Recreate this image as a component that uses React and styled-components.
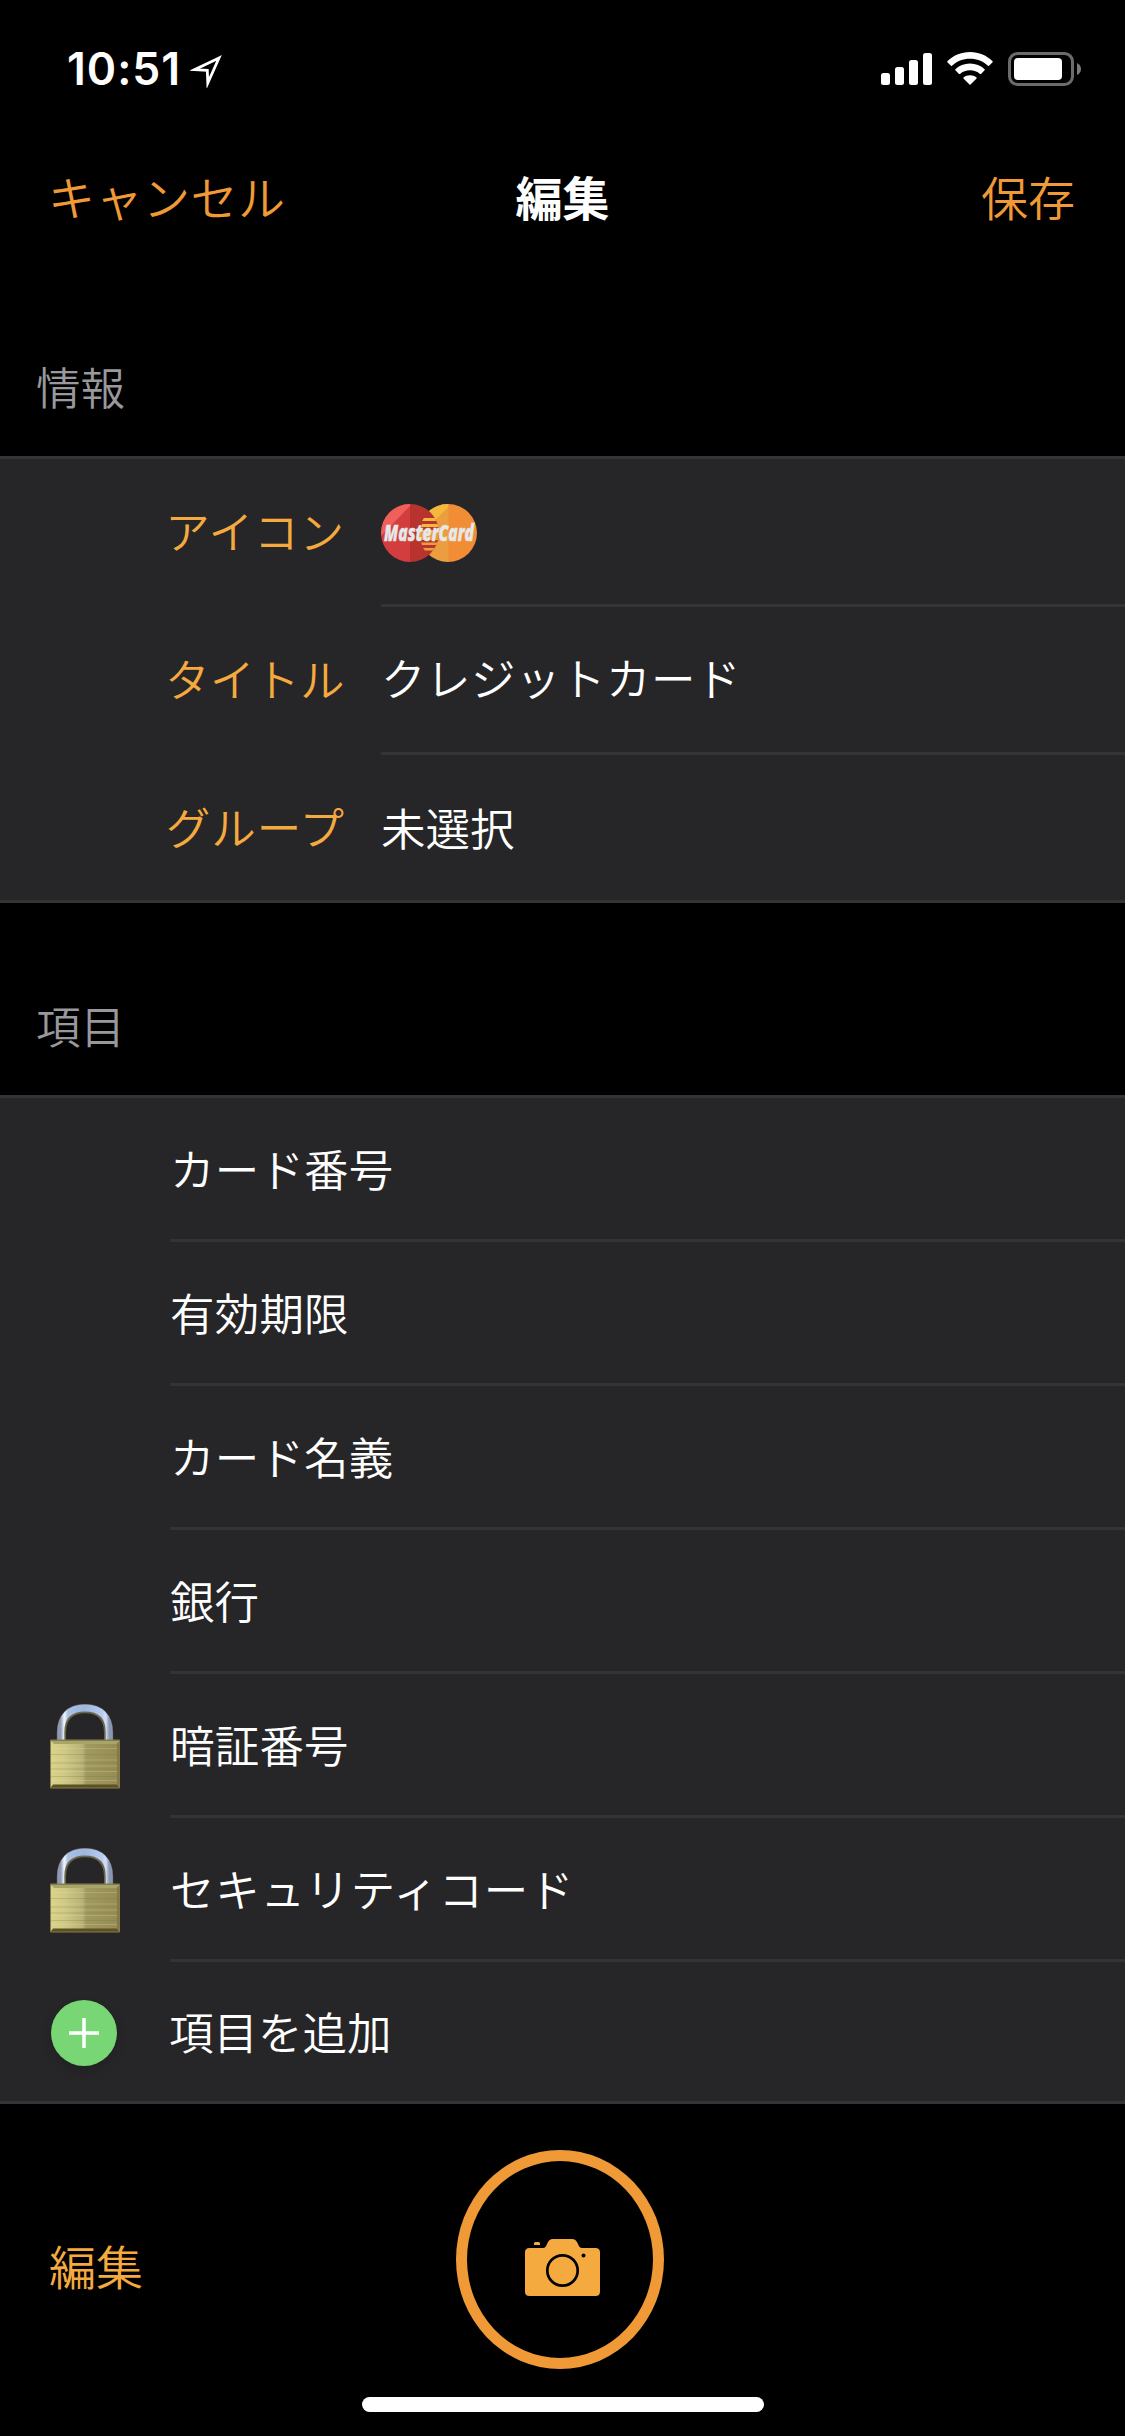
import React from 'react'

import styled, { createGlobalStyle, css } from 'styled-components'

const INFO_ROWS = [
  { label: 'アイコン', icon: true, labelSpacing: 1 },
  { label: 'タイトル', value: 'クレジットカード', lift: 6, spacing: 0.5, labelSpacing: 0.5 },
  { label: 'グループ', value: '未選択', labelSpacing: 1 }
]

const FIELDS = [
  { name: 'カード番号', spacing: 0.2 },
  { name: '有効期限', spacing: 0.2 },
  { name: 'カード名義', spacing: 0.2 },
  { name: '銀行' },
  { name: '暗証番号', locked: true, spacing: 0.2 },
  { name: 'セキュリティコード', locked: true, spacing: 0.7 }
]

function LocationIcon() {
  return (
    <svg width="32" height="33" viewBox="0 0 32 33">
      <path
        d="M29 3 L4.5 14.7 L17.3 15.4 L17.8 28 Z"
        fill="none"
        stroke="#fff"
        strokeWidth="2.8"
        strokeMiterlimit="8"
      />
    </svg>
  )
}

function SignalIcon() {
  return (
    <svg width="51" height="34" viewBox="0 0 51 34" fill="#fff">
      <rect x="0" y="21" width="9" height="12" rx="2.5" />
      <rect x="14" y="15" width="9" height="18" rx="2.5" />
      <rect x="28" y="8" width="9" height="25" rx="2.5" />
      <rect x="42" y="1" width="9" height="32" rx="2.5" />
    </svg>
  )
}

function WifiIcon() {
  return (
    <svg width="46" height="34" viewBox="0 0 46 34" fill="#fff">
      <path d="M23 0 C32 0 40 3.6 45.6 9.2 Q46 9.7 45.6 10.2 L42 13.8 Q41.5 14.2 41 13.8 C36.3 9.2 30 6.8 23 6.8 C16 6.8 9.7 9.2 5 13.8 Q4.5 14.2 4 13.8 L0.4 10.2 Q0 9.7 0.4 9.2 C6 3.6 14 0 23 0 Z" />
      <path d="M23 11.6 C28.7 11.6 33.9 13.8 37.6 17.3 Q38.1 17.8 37.6 18.3 L34 21.9 Q33.5 22.3 33 21.9 C30.3 19.5 26.8 18.2 23 18.2 C19.2 18.2 15.7 19.5 13 21.9 Q12.5 22.3 12 21.9 L8.4 18.3 Q7.9 17.8 8.4 17.3 C12.1 13.8 17.3 11.6 23 11.6 Z" />
      <path d="M23 23.2 C25.5 23.2 27.8 24.1 29.5 25.5 Q30 26 29.5 26.5 L23.5 32.6 Q23 33.1 22.5 32.6 L16.5 26.5 Q16 26 16.5 25.5 C18.2 24.1 20.5 23.2 23 23.2 Z" />
    </svg>
  )
}

function BatteryIcon() {
  return (
    <svg width="73" height="34" viewBox="0 0 73 34">
      <rect x="1.5" y="1.5" width="63" height="31" rx="8" fill="none" stroke="#6b6b6b" strokeWidth="3" />
      <rect x="6" y="6" width="48" height="22" rx="4" fill="#fff" />
      <path d="M69 11 Q73 13 73 17 Q73 21 69 23 Z" fill="#7a7a7a" />
    </svg>
  )
}

function MasterCardIcon() {
  return (
    <svg width="96" height="58" viewBox="0 0 96 58" overflow="visible">
      <defs>
        <clipPath id="left-disc">
          <circle cx="29" cy="29" r="29" />
        </clipPath>
        <clipPath id="right-disc">
          <circle cx="67" cy="29" r="29" />
        </clipPath>
      </defs>
      <g clipPath="url(#right-disc)">
        <rect x="38" width="30" height="58" fill="#eb9d40" />
        <path d="M38 0 H67.5 V3 L38 32 Z" fill="#f4b83d" />
        <rect x="67.5" width="29" height="58" fill="#f08d35" />
      </g>
      <g clipPath="url(#left-disc)">
        <rect width="29" height="58" fill="#d33d3e" />
        <path d="M0 0 H29 V2 L0 32 Z" fill="#ee6059" />
        <rect x="29" width="30" height="58" fill="#b9332e" />
        <path d="M43 14 H60 V17 H41 Z M41 20 H60 V23 H40 Z" fill="#f4b83d" />
        <path d="M39 26 H60 V36 H39 Z M40 38.5 H60 V41 H41 Z M42 44 H60 V46.5 H44 Z" fill="#eb9d40" />
      </g>
      <CardWord x="3" y="37" textLength="90" lengthAdjust="spacingAndGlyphs">
        MasterCard
      </CardWord>
    </svg>
  )
}

function LockIcon() {
  return (
    <svg width="70" height="85" viewBox="0 0 70 85">
      <defs>
        <linearGradient id="steel" x1="0" x2="1" y1="0" y2="0">
          <stop offset="0" stopColor="#8f9bb5" />
          <stop offset="0.07" stopColor="#f4f7ff" />
          <stop offset="0.15" stopColor="#a9c0e8" />
          <stop offset="0.5" stopColor="#9db6e0" />
          <stop offset="0.86" stopColor="#b9cdf2" />
          <stop offset="0.93" stopColor="#d3e0fb" />
          <stop offset="1" stopColor="#8a97b0" />
        </linearGradient>
        <linearGradient id="brass" x1="0" x2="1" y1="0" y2="0">
          <stop offset="0" stopColor="#d9d389" />
          <stop offset="0.2" stopColor="#cfc986" />
          <stop offset="0.46" stopColor="#b8b276" />
          <stop offset="0.52" stopColor="#9f995f" />
          <stop offset="1" stopColor="#968c55" />
        </linearGradient>
      </defs>
      <path d="M11 37 V29 C11 13 20 4 35 4 C50 4 59 13 59 29 V37" fill="none" stroke="#5f5e55" strokeWidth="8.5" />
      <path d="M14.5 37 V29 C14.5 15 22 7.8 35 7.8 C48 7.8 55.5 15 55.5 29 V37" fill="none" stroke="#6b6547" strokeWidth="3" />
      <path d="M10.8 37 V28 C10.8 12.5 20 4 35 4 C50 4 59.2 12.5 59.2 28 V37" fill="none" stroke="url(#steel)" strokeWidth="7" />
      <rect x="0" y="35.5" width="70" height="49" rx="1" fill="#837c4c" />
      <rect x="1" y="37" width="68" height="45.5" fill="url(#brass)" />
      <path d="M1 37 H69 L66 40 H4 Z" fill="#a8a56b" />
      <path d="M1 44.5 H69 M1 56 H69 M1 62 H69 M1 67.5 H69 M1 76.5 H69" stroke="#e7e2a5" strokeOpacity="0.25" />
      <path d="M1 50.5 H69 M1 59 H69 M1 65 H69 M1 72.5 H69" stroke="#77713f" strokeOpacity="0.25" />
      <path d="M3 80.5 H67 L69 83.5 H1 Z" fill="#5d5022" />
      <path d="M67 40 L69 38 V82 L67 80 Z" fill="#857a46" />
    </svg>
  )
}

function CameraIcon() {
  return (
    <svg width="75" height="57" viewBox="0 0 75 57">
      <path
        d="M4.5 9 H18 C20 9 21 7.5 22 5 C23.5 1.5 25 0 28 0 H47 C50 0 51.5 1.5 53 5 C54 7.500 55 9 57 9 H70.5 Q75 9 75 13.5 V52.5 Q75 57 70.5 57 H4.5 Q0 57 0 52.5 V13.5 Q0 9 4.5 9 Z"
        fill="#f5aa3f"
      />
      <path d="M10 3 H14 L15 4 V6 H9 V4 Z" fill="#f5aa3f" />
      <circle cx="37.5" cy="31.5" r="15.2" fill="none" stroke="#000" strokeWidth="2.7" />
      <circle cx="58.5" cy="16.5" r="2" fill="#000" />
    </svg>
  )
}

function InfoRow(props) {
  const { label, value, icon, lift, spacing, labelSpacing, height } = props

  return (
    <Row height={height}>
      <InfoLabel>
        <Text lift={3} spacing={labelSpacing}>{label}</Text>
      </InfoLabel>

      <Cell>
        {icon ? <MasterCardIcon /> : <Text lift={lift} spacing={spacing}>{value}</Text>}
      </Cell>
    </Row>
  )
}

function FieldRow(props) {
  const { name, locked, spacing } = props

  return (
    <Row height={144}>
      <Leading>{locked && <LockIcon />}</Leading>

      <Cell>
        <Text spacing={spacing}>{name}</Text>
      </Cell>
    </Row>
  )
}

function App() {
  return (
    <Screen>
      <GlobalStyle />

      <StatusBar>
        <Clock>
          10:51
          <LocationIcon />
        </Clock>

        <StatusIcons>
          <SignalIcon />
          <WifiIcon />
          <BatteryIcon />
        </StatusIcons>
      </StatusBar>

      <NavBar>
        <NavButton>キャンセル</NavButton>
        <Title>編集</Title>
        <NavButton $end>保存</NavButton>
      </NavBar>

      <SectionTitle height={198}>情報</SectionTitle>

      <Group>
        {INFO_ROWS.map((row, i) => (
          <InfoRow
            key={row.label}
            height={i === INFO_ROWS.length - 1 ? 145 : 148}
            {...row}
          />
        ))}
      </Group>

      <SectionTitle height={192}>項目</SectionTitle>

      <Group>
        {FIELDS.map(field => (
          <FieldRow key={field.name} {...field} />
        ))}

        <Row height={139}>
          <Leading>
            <AddBadge>
              <svg width="30" height="30" viewBox="0 0 30 30">
                <path d="M15 0 V30 M0 15 H30" stroke="#fff" strokeWidth="3.5" />
              </svg>
            </AddBadge>
          </Leading>

          <Cell>
            <AddText>項目を追加</AddText>
          </Cell>
        </Row>
      </Group>

      <Toolbar>
        <EditButton>編集</EditButton>

        <Shutter>
          <CameraIcon />
        </Shutter>
      </Toolbar>

      <HomeIndicator />
    </Screen>
  )
}

const GlobalStyle = createGlobalStyle`
  * {
    box-sizing: border-box;
  }

  body {
    margin: 0;
    background: #000;
  }

  svg {
    display: block;
    flex: none;
  }

  button {
    padding: 0;
    border: 0;
    background: none;
    font: inherit;
  }
`

const Screen = styled.div`
  display: flex;
  flex-direction: column;

  width: 1125px;
  height: 2436px;
  overflow: hidden;

  background: #000;
  color: #fff;

  font-family: 'Noto Sans CJK JP', sans-serif;
  font-size: 44.5px;
  font-weight: 350;
  line-height: 60px;
  white-space: nowrap;
`

const StatusBar = styled.header`
  display: flex;
  align-items: center;
  justify-content: space-between;

  height: 138px;
  padding: 0 44px 0 67px;
`

const Clock = styled.div`
  display: flex;
  align-items: center;
  gap: 9px;

  font-family: Inter, sans-serif;
  font-size: 44.5px;
  font-weight: 600;
  letter-spacing: 1px;

  svg {
    margin-top: 4px;
  }
`

const StatusIcons = styled.div`
  display: flex;
  align-items: center;
  gap: 15px;
`

const NavBar = styled.nav`
  display: grid;
  grid-template-columns: 1fr auto 1fr;
  align-items: center;

  height: 120px;
  padding: 0 50px 4px;

  font-size: 47px;
`

const NavButton = styled.button`
  justify-self: ${props => (props.$end ? 'end' : 'start')};

  color: #f09937;

  ${props => !props.$end && css`
    margin-left: -2px;
    letter-spacing: .5px;
  `}
`

const Title = styled.h1`
  margin: 0;

  font-size: 47px;
  font-weight: 700;
`

const SectionTitle = styled.h2`
  display: flex;
  align-items: flex-end;

  height: ${props => props.height}px;
  margin: 0;
  padding: 0 36px 40px;

  color: #98989d;
  font-size: 44.5px;
  font-weight: 350;
`

const Row = styled.div`
  display: flex;

  height: ${props => props.height}px;
`

const Group = styled.section`
  border-top: 3px solid #343436;
  border-bottom: 3px solid #343436;

  background: #262628;
`

const InfoLabel = styled.div`
  display: flex;
  align-items: center;
  justify-content: flex-end;

  width: 381px;
  padding-right: 36px;
  border-bottom: 3px solid transparent;

  color: #f5aa3f;

  ${Row}:last-child > & {
    border-bottom: 0;
  }
`

const Cell = styled.div`
  display: flex;
  flex: 1;
  align-items: center;

  border-bottom: 3px solid #343436;

  svg {
    margin-top: 2px;
  }

  ${Row}:last-child > & {
    border-bottom: 0;
  }
`

const Leading = styled.div`
  display: flex;
  align-items: center;

  width: 170px;
  padding-left: 50px;
`

const Text = styled.span`
  padding-bottom: ${props => props.lift || 1}px;

  letter-spacing: ${props => props.spacing || 0}px;
`

const AddText = styled(Text)`
  margin-left: -1px;
`

const AddBadge = styled.div`
  display: flex;
  align-items: center;
  justify-content: center;

  width: 66px;
  height: 66px;
  margin: 2px 0 0 1px;
  border-radius: 50%;

  background: #78d774;
  box-shadow: 0 6px 12px rgba(0, 0, 0, .12);
`

const CardWord = styled.text`
  fill: #e6e8e8;
  stroke: #e6e8e8;
  stroke-width: .4px;

  font-family: 'Open Sans', sans-serif;
  font-size: 22px;
  font-style: italic;
  font-weight: 800;
  line-height: 1;
`

const Toolbar = styled.footer`
  display: grid;
  grid-template-columns: 456px 208px 1fr;
  align-items: center;

  height: 293px;
  padding-top: 17px;
`

const EditButton = styled.button`
  justify-self: start;

  margin: 6px 0 0 49px;
  padding-top: 6px;

  color: #f5aa3f;
  font-size: 47px;
`

const Shutter = styled.div`
  display: flex;
  justify-content: center;

  width: 208px;
  height: 219px;
  padding: 78px 0 0 5px;
  border: 11px solid #f09937;
  border-radius: 50%;
`

const HomeIndicator = styled.div`
  align-self: center;

  width: 402px;
  height: 15px;
  border-radius: 8px;

  background: #fff;
`

export default App
